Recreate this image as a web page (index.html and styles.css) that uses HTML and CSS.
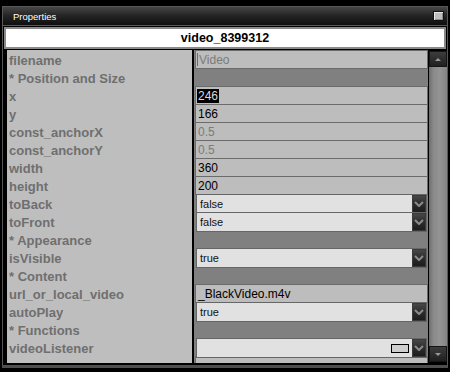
FILE: index.html
```html
<!DOCTYPE html>
<html>
<head>
<meta charset="utf-8">
<link rel="stylesheet" href="styles.css">
</head>
<body>
<div class="window">
  <div class="titlebar"><span class="title">Properties</span><span class="maxbtn"></span></div>
  <div class="sep"></div>
  <div class="header">video_8399312</div>
  <div class="content">
    <div class="labels">
      <div class="label">filename</div>
      <div class="label">* Position and Size</div>
      <div class="label">x</div>
      <div class="label">y</div>
      <div class="label">const_anchorX</div>
      <div class="label">const_anchorY</div>
      <div class="label">width</div>
      <div class="label">height</div>
      <div class="label">toBack</div>
      <div class="label">toFront</div>
      <div class="label">* Appearance</div>
      <div class="label">isVisible</div>
      <div class="label">* Content</div>
      <div class="label">url_or_local_video</div>
      <div class="label">autoPlay</div>
      <div class="label">* Functions</div>
      <div class="label">videoListener</div>
      <div class="label"></div>
    </div>
    <div class="values">
      <div class="row"><div class="field dis caretfield"><span class="caret"></span>Video</div></div>
      <div class="row"></div>
      <div class="row"><div class="field"><span class="sel">246</span></div></div>
      <div class="row"><div class="field">166</div></div>
      <div class="row"><div class="field dis">0.5</div></div>
      <div class="row"><div class="field dis">0.5</div></div>
      <div class="row"><div class="field">360</div></div>
      <div class="row"><div class="field">200</div></div>
      <div class="row"><div class="dd"><div class="dd-text">false</div><div class="dd-arrow"><svg width="10" height="6" viewBox="0 0 10 6"><polyline points="1,1 5,5 9,1" fill="none" stroke="#8c8c8c" stroke-width="2"/></svg></div></div></div>
      <div class="row"><div class="dd"><div class="dd-text">false</div><div class="dd-arrow"><svg width="10" height="6" viewBox="0 0 10 6"><polyline points="1,1 5,5 9,1" fill="none" stroke="#8c8c8c" stroke-width="2"/></svg></div></div></div>
      <div class="row"></div>
      <div class="row"><div class="dd"><div class="dd-text">true</div><div class="dd-arrow"><svg width="10" height="6" viewBox="0 0 10 6"><polyline points="1,1 5,5 9,1" fill="none" stroke="#8c8c8c" stroke-width="2"/></svg></div></div></div>
      <div class="row"></div>
      <div class="row"><div class="field">_BlackVideo.m4v</div></div>
      <div class="row"><div class="dd"><div class="dd-text">true</div><div class="dd-arrow"><svg width="10" height="6" viewBox="0 0 10 6"><polyline points="1,1 5,5 9,1" fill="none" stroke="#8c8c8c" stroke-width="2"/></svg></div></div></div>
      <div class="row"></div>
      <div class="row"><div class="dd"><div class="dd-text swatchwrap"><span class="swatch"></span></div><div class="dd-arrow"><svg width="10" height="6" viewBox="0 0 10 6"><polyline points="1,1 5,5 9,1" fill="none" stroke="#8c8c8c" stroke-width="2"/></svg></div></div></div>
      <div class="row"><div class="field"></div></div>
    </div>
    <div class="scrollbar">
      <div class="sbtn"><span class="tri-up"></span></div>
      <div class="track"></div>
      <div class="sbtn"><span class="tri-down"></span></div>
    </div>
  </div>
</div>
</body>
</html>
```

FILE: styles.css
```css
* { box-sizing: border-box; }

body {
  margin: 0;
  background: #000;
  width: 450px;
  height: 372px;
  overflow: hidden;
  font-family: "Liberation Sans", Arial, sans-serif;
}

.window {
  margin: 6px 0 0 2px;
  width: 446px;
  height: 362px;
  border: 1px solid #575757;
  border-bottom: 3px solid #4e4e4e;
  background: #000;
  display: flex;
  flex-direction: column;
}

.titlebar {
  flex: none;
  height: 18px;
  display: flex;
  align-items: center;
  justify-content: space-between;
  padding: 0 3px 0 10px;
  background: linear-gradient(#474747, #262626 45%, #0e0e0e);
  color: #fff;
  font-size: 9.5px;
}

.maxbtn {
  width: 11px;
  height: 10px;
  border: 1px solid #111;
  background: #bdbdbd;
  box-shadow: inset 1px 1px 0 #e6e6e6, inset -1px -1px 0 #8a8a8a;
}

.sep {
  flex: none;
  height: 2px;
  border-top: 1px solid #585858;
}

.header {
  flex: none;
  height: 22px;
  margin: 0 1px 1px 1px;
  border: 2px solid #8a8a8a;
  background: #fff;
  text-align: center;
  font-weight: bold;
  font-size: 12.5px;
  line-height: 18px;
  color: #000;
}

.content {
  flex: none;
  height: 313px;
  display: flex;
  padding-left: 4px;
  overflow: hidden;
}

.labels {
  flex: none;
  width: 185px;
  background: #bebebe;
  margin-right: 2px;
}

.label {
  height: 18px;
  padding: 2px 0 0 2px;
  line-height: 18px;
  font-size: 13px;
  font-weight: bold;
  color: #6f6f6f;
  white-space: nowrap;
}

.values {
  flex: none;
  width: 234px;
  background: #808080;
  margin-right: 1px;
}

.row {
  height: 18px;
}

.field {
  margin-left: 1px;
  width: 233px;
  height: 19px;
  border: 1px solid #6b6b6b;
  background: #bdbdbd;
  font-size: 12px;
  line-height: 18px;
  padding-left: 2px;
  color: #000;
  white-space: nowrap;
  overflow: hidden;
}

.field.dis { color: #7b7b7b; }
.field.caretfield { padding-left: 1px; }

.caret {
  display: inline-block;
  width: 1px;
  height: 13px;
  background: #6a6a6a;
  vertical-align: -2px;
  margin-right: 1px;
}

.sel {
  background: #000;
  color: #dadada;
  padding: 0 1px;
  margin-left: -1px;
}

.dd {
  position: relative;
  margin-left: 2px;
  width: 231px;
  height: 20px;
  border: 1px solid #666;
  background: #e1e1e1;
  display: flex;
  font-size: 11px;
  line-height: 18px;
  color: #111;
}

.dd-text {
  flex: 1;
  padding-left: 3px;
}

.swatchwrap {
  display: flex;
  align-items: center;
  justify-content: flex-end;
  padding-right: 3px;
}

.swatch {
  width: 18px;
  height: 9px;
  border: 1px solid #000;
  background: #cfcfcf;
}

.dd-arrow {
  width: 14px;
  height: 18px;
  background: linear-gradient(#4a4a4a, #2c2c2c 50%, #1b1b1b);
  box-shadow: inset 0 0 0 1px #3a3a3a;
  display: flex;
  align-items: center;
  justify-content: center;
}

.scrollbar {
  flex: none;
  width: 18px;
  display: flex;
  flex-direction: column;
  padding: 1px 0;
}

.sbtn {
  flex: none;
  height: 16px;
  background: linear-gradient(#3c3c3c, #202020);
  border: 1px solid #151515;
  display: flex;
  align-items: center;
  justify-content: center;
}

.track {
  flex: 1;
  background: linear-gradient(to right, #6e6e6e, #8a8a8a 25%, #949494 60%, #848484);
}

.tri-up {
  width: 0;
  height: 0;
  border-left: 3px solid transparent;
  border-right: 3px solid transparent;
  border-bottom: 3px solid #9a9a9a;
}

.tri-down {
  width: 0;
  height: 0;
  border-left: 3px solid transparent;
  border-right: 3px solid transparent;
  border-top: 3px solid #9a9a9a;
}
```
